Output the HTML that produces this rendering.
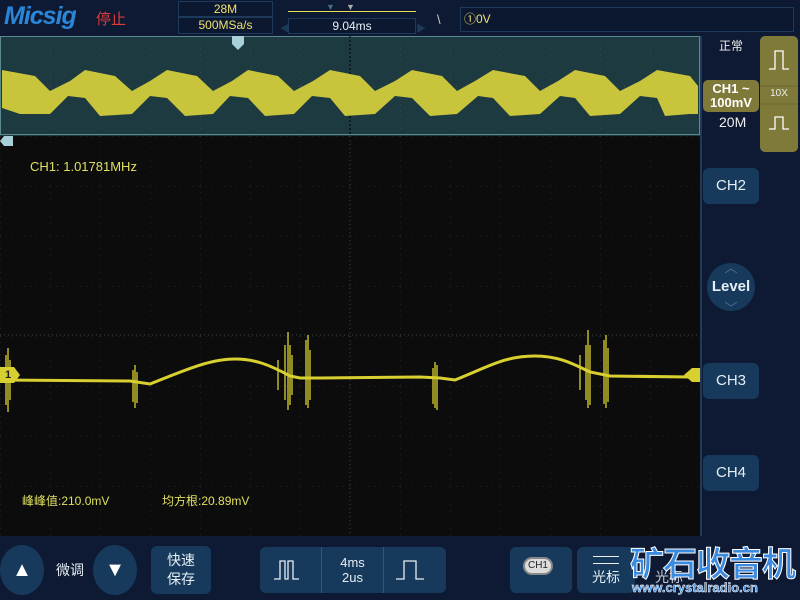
<!DOCTYPE html>
<html><head><meta charset="utf-8"><style>
*{margin:0;padding:0;box-sizing:border-box}
body{width:800px;height:600px;overflow:hidden;background:#0e1a33;font-family:"Liberation Sans","Noto Sans CJK SC",sans-serif;position:relative}
.a{position:absolute}
.box{position:absolute;border:1px solid #1e3a5a;background:#0b1830}
.btn{position:absolute;background:#173a5c;border-radius:6px;color:#e6eef5;text-align:center}
</style></head><body>
<div class="a" style="left:0;top:0;width:800px;height:36px;background:#0e1a33"></div>
<div class="a" style="left:4px;top:2px;font:italic bold 25px 'Liberation Sans',sans-serif;color:#2a86d8;letter-spacing:-1px">Micsig</div>
<div class="a" style="left:96px;top:8px;font-size:15px;color:#e03a3a">停止</div>
<div class="box" style="left:178px;top:1px;width:95px;height:16px;color:#f0e070;font-size:12px;text-align:center;line-height:14px">28M</div>
<div class="box" style="left:178px;top:17px;width:95px;height:17px;color:#f0e070;font-size:12px;text-align:center;line-height:15px">500MSa/s</div>
<div class="a" style="left:288px;top:11px;width:128px;height:1px;background:#e8e050"></div>
<div class="a" style="left:346px;top:2px;color:#aaa;font-size:9px">▼</div>
<div class="a" style="left:326px;top:2px;color:#4a6a8a;font-size:9px">▼</div>
<div class="box" style="left:288px;top:18px;width:128px;height:16px;color:#e8eef5;font-size:12px;text-align:center;line-height:14px">9.04ms</div>
<div class="a" style="left:280px;top:20px;color:#1e3a5a;font-size:10px">◀</div>
<div class="a" style="left:416px;top:20px;color:#1e3a5a;font-size:10px">▶</div>
<div class="a" style="left:437px;top:12px;color:#ccc;font-size:13px">\</div>
<div class="box" style="left:460px;top:7px;width:334px;height:25px;color:#f0e070;font-size:12px;line-height:22px;padding-left:3px">①0V</div>

<svg class="a" style="left:0;top:36px" width="702" height="500">
<defs><pattern id="g" width="50" height="50" patternUnits="userSpaceOnUse" x="0" y="0"><path d="M0 0V50M0 0H50" stroke="#4a5a5a" stroke-width="1" stroke-dasharray="1,5" fill="none"/></pattern></defs>
<rect x="0" y="0" width="702" height="100" fill="#1d3a40"/>
<rect x="0.5" y="0.5" width="699" height="98" fill="url(#g)" stroke="#5a8a90"/>
<line x1="350" y1="0" x2="350" y2="100" stroke="#000" stroke-dasharray="2,2"/>
<path d="M2,34 L35,40 L50,55 L70,45 L85,34 L115,40 L132,55 L150,45 L167,34 L197,40 L213,55 L232,45 L248,34 L278,40 L294,55 L313,45 L330,34 L360,40 L375,55 L395,45 L412,34 L442,40 L457,55 L475,45 L493,34 L525,40 L540,55 L558,45 L575,34 L605,40 L620,55 L640,45 L657,34 L690,40 L698,50 L698,78 L690,78 L665,80 L657,62 L640,60 L620,78 L590,80 L575,62 L560,60 L540,78 L510,80 L493,62 L478,60 L457,78 L430,80 L412,62 L395,60 L375,78 L345,80 L330,62 L312,60 L294,78 L265,80 L248,62 L230,60 L213,78 L185,80 L167,62 L150,60 L132,78 L100,80 L85,62 L68,60 L50,78 L20,78 L2,72 Z" fill="#c8c43c"/>
<rect x="0" y="100" width="702" height="400" fill="#0c0c0c"/>
<rect x="0" y="100" width="702" height="400" fill="url(#g)" opacity=".6"/>
<line x1="350" y1="100" x2="350" y2="500" stroke="#444" stroke-dasharray="1,3"/>
<line x1="0" y1="299" x2="700" y2="299" stroke="#444" stroke-dasharray="1,3"/>
<line x1="701" y1="0" x2="701" y2="500" stroke="#1e3a5a" stroke-width="2"/>
<path d="M232,0 h12 v8 l-6,6 l-6,-6z" fill="#a8d0d8"/>
<path d="M0,105 l4,-5 h9 v10 h-9z" fill="#a8d0d8"/>
</svg>
<div class="a" style="left:30px;top:159px;color:#e0e060;font-size:13px">CH1: 1.01781MHz</div>
<svg class="a" style="left:0;top:320px" width="700" height="100">
<g fill="none" stroke="#d8d030" stroke-width="3">
<path d="M0,60 L130,61 L150,64 C185,50 210,39 235,39 C255,39 270,45 290,56 L300,58 L320,58 L420,57 L440,58 L455,60 C490,46 505,36 535,36 C560,36 575,45 590,52 L610,56 L690,57"/>
</g>
<g stroke="#d8d030" stroke-width="1.3">
<path d="M6,35V85M8,28V92M10,40V80M133,50V82M135,45V88M137,52V83M285,25V80M288,12V90M290,25V85M292,35V75M306,20V85M308,15V88M310,30V80M433,48V84M435,42V88M437,45V90M586,25V80M588,10V88M590,25V85M604,20V84M606,15V88M608,28V82M278,40V70M580,35V70"/>
</g>
</svg>
<div class="a" style="left:0;top:367px;width:20px;height:16px;background:#d8d030;clip-path:polygon(0 0,70% 0,100% 50%,70% 100%,0 100%);font:bold 11px sans-serif;color:#222;padding-left:5px;line-height:16px">1</div>
<div class="a" style="left:684px;top:368px;width:16px;height:14px;background:#d8d030;clip-path:polygon(0 50%,50% 0,100% 0,100% 100%,50% 100%)"></div>
<div class="a" style="left:22px;top:492px;color:#e0e060;font-size:12px">峰峰值:210.0mV</div>
<div class="a" style="left:162px;top:492px;color:#e0e060;font-size:12px">均方根:20.89mV</div>

<div class="a" style="left:719px;top:37px;color:#eee;font-size:12px">正常</div>
<div class="a" style="left:760px;top:36px;width:38px;height:116px;background:#807a3a;border-radius:5px"></div>
<svg class="a" style="left:760px;top:36px" width="38" height="116"><path d="M9,33h6v-18h8v18h6M9,93h6v-12h8v12h6" stroke="#fff" stroke-width="1.3" fill="none"/><line x1="0" y1="50" x2="38" y2="50" stroke="#6a6530"/><line x1="0" y1="68" x2="38" y2="68" stroke="#6a6530"/></svg>
<div class="a" style="left:760px;top:88px;width:38px;text-align:center;color:#eee;font-size:10px">10X</div>
<div class="a" style="left:703px;top:80px;width:56px;height:32px;background:#807a3a;border-radius:5px;color:#fff;font:bold 13px sans-serif;text-align:center;line-height:14px;padding-top:2px">CH1 ~<br>100mV</div>
<div class="a" style="left:719px;top:114px;color:#eee;font-size:14px">20M</div>
<div class="btn" style="left:703px;top:168px;width:56px;height:36px;line-height:36px;font-size:15px">CH2</div>
<div class="a" style="left:707px;top:263px;width:48px;height:48px;border-radius:50%;background:#173a5c;color:#e6eef5;font:bold 15px sans-serif;text-align:center;line-height:48px">Level</div>
<svg class="a" style="left:707px;top:263px" width="48" height="48"><path d="M18,10l6,-4l6,4M18,39l6,4l6,-4" stroke="#4a6a8a" fill="none"/></svg>
<div class="btn" style="left:703px;top:363px;width:56px;height:36px;line-height:36px;font-size:15px">CH3</div>
<div class="btn" style="left:703px;top:455px;width:56px;height:36px;line-height:36px;font-size:15px">CH4</div>

<div class="a" style="left:0;top:545px;width:44px;height:50px;border-radius:50%;background:#173a5c;color:#fff;font-size:20px;text-align:center;line-height:50px">▲</div>
<div class="a" style="left:56px;top:560px;color:#e6eef5;font-size:14px">微调</div>
<div class="a" style="left:93px;top:545px;width:44px;height:50px;border-radius:50%;background:#173a5c;color:#fff;font-size:20px;text-align:center;line-height:50px">▼</div>
<div class="btn" style="left:151px;top:546px;width:60px;height:48px;font-size:14px;line-height:19px;padding-top:5px">快速<br>保存</div>
<div class="btn" style="left:260px;top:547px;width:186px;height:46px"></div>
<div class="a" style="left:321px;top:547px;width:1px;height:46px;background:#2a5a80"></div>
<div class="a" style="left:383px;top:547px;width:1px;height:46px;background:#2a5a80"></div>
<svg class="a" style="left:260px;top:547px" width="186" height="46"><path d="M14,32h6v-18h5v18h3v-18h5v18h6M136,32h8v-18h12v18h8" stroke="#e6eef5" stroke-width="1.3" fill="none"/></svg>
<div class="a" style="left:322px;top:555px;width:61px;text-align:center;color:#e6eef5;font-size:13px;line-height:15px">4ms<br>2us</div>
<div class="btn" style="left:510px;top:547px;width:62px;height:46px"></div>
<div class="a" style="left:523px;top:557px;width:30px;height:18px;border-radius:9px;background:#ddd;border:2px solid #888;font-size:10px;color:#222;text-align:center;line-height:14px">CH1</div>
<div class="btn" style="left:577px;top:547px;width:58px;height:46px"></div>
<div class="a" style="left:593px;top:556px;width:26px;height:8px;border-top:1.5px solid #eee;border-bottom:1.5px solid #eee"></div>
<div class="a" style="left:592px;top:567px;color:#e6eef5;font-size:14px">光标</div>
<div class="a" style="left:655px;top:567px;color:#c8ccd5;font-size:14px">光标</div>
<div class="a" style="left:630px;top:537px;color:#3a8ae0;font:bold 34px 'Noto Sans CJK SC',sans-serif;letter-spacing:-1px;-webkit-text-stroke:1px #fff">矿石收音机</div>
<div class="a" style="left:632px;top:580px;color:#3a8ae0;font:bold 13px sans-serif;-webkit-text-stroke:.5px #fff">www.crystalradio.cn</div>
</body></html>
